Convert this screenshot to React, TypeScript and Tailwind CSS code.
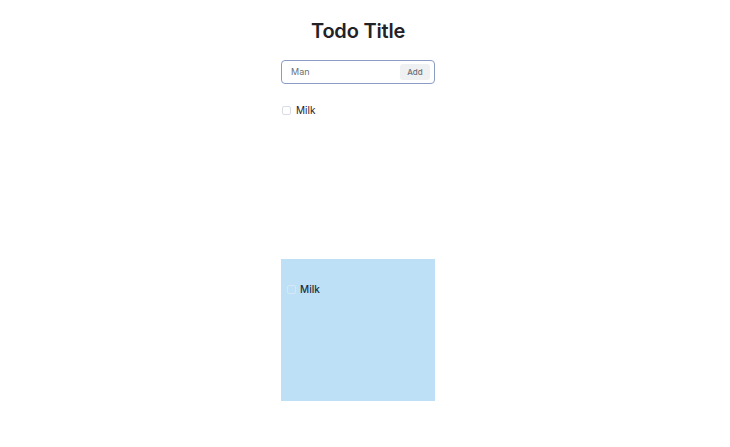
import { useState } from "react";

type Todo = { id: number; text: string; done: boolean };

function TodoRow({ todo, onToggle }: { todo: Todo; onToggle: () => void }) {
  return (
    <label className="flex items-center gap-[5px] text-[10px] text-[#1f2328]">
      <input
        type="checkbox"
        checked={todo.done}
        onChange={onToggle}
        className="h-[9px] w-[9px] appearance-none rounded-[2px] border border-[#d9dce1] bg-white"
      />
      <span>{todo.text}</span>
    </label>
  );
}

export default function App() {
  const [draft, setDraft] = useState("Man");
  const [todos, setTodos] = useState<Todo[]>([{ id: 1, text: "Milk", done: false }]);

  const add = () => {
    if (!draft.trim()) return;
    setTodos([...todos, { id: Date.now(), text: draft.trim(), done: false }]);
    setDraft("");
  };

  const toggle = (id: number) =>
    setTodos(todos.map((t) => (t.id === id ? { ...t, done: !t.done } : t)));

  return (
    <div
      className="min-h-screen bg-white pr-[14px]"
      style={{ fontFamily: "Inter, 'Liberation Sans', sans-serif" }}
    >
      <div className="mx-auto flex w-[154px] flex-col pt-[17px]">
        <h1 className="text-center text-[20px] font-semibold leading-[28px] tracking-[-0.2px] text-[#1f2328]">
          Todo Title
        </h1>

        <div className="mt-[15px] flex h-[24px] items-center rounded-[4px] border border-[#8a9bc6] bg-white pl-[9px] pr-[4px]">
          <input
            value={draft}
            onChange={(e) => setDraft(e.target.value)}
            className="min-w-0 flex-1 bg-transparent text-[9px] text-[#6b6f76] outline-none"
          />
          <button
            onClick={add}
            className="h-[16px] w-[30px] rounded-[3px] bg-[#eff0f2] text-[8px] font-medium text-[#6b6f76]"
          >
            Add
          </button>
        </div>

        <div className="mt-[19px] flex flex-col gap-2 pl-[1px]">
          {todos.map((t) => (
            <TodoRow key={t.id} todo={t} onToggle={() => toggle(t.id)} />
          ))}
        </div>

        <div className="mt-[141px] h-[142px] bg-[#bde0f6] pl-[6px] pt-[23px]">
          {todos.map((t) => (
            <div key={t.id} className="flex items-center gap-[4px] text-[10px] font-medium text-[#1f2d3a]">
              <span className="h-[9px] w-[9px] rounded-[2px] border border-[#d6e8f5]" />
              <span>{t.text}</span>
            </div>
          ))}
        </div>
      </div>
    </div>
  );
}
